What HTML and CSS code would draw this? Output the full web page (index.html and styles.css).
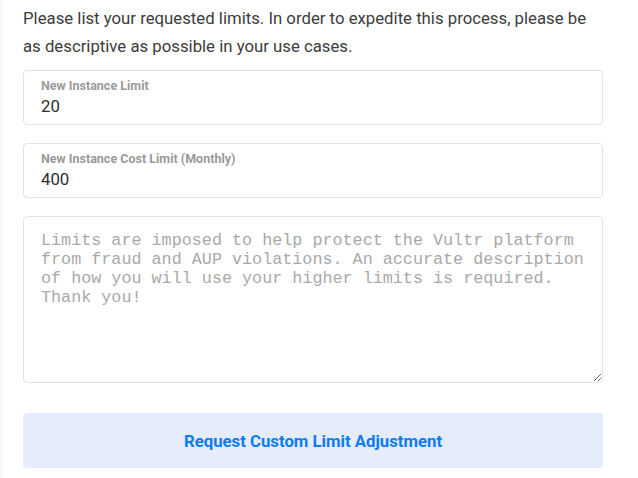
FILE: index.html
```html
<!DOCTYPE html>
<html lang="en">
<head>
  <meta charset="UTF-8">
  <title>Request Limit Increase</title>
  <link rel="stylesheet" href="styles.css">
</head>
<body class="limits-page">
  <div class="container">
    <p class="intro">Please list your requested limits. In order to expedite this process, please be as descriptive as possible in your use cases.</p>

    <label class="field">
      <span class="field-label">New Instance Limit</span>
      <input type="text" class="field-input" value="20">
    </label>

    <label class="field">
      <span class="field-label">New Instance Cost Limit (Monthly)</span>
      <input type="text" class="field-input" value="400">
    </label>

    <textarea class="use-case" placeholder="Limits are imposed to help protect the Vultr platform from fraud and AUP violations. An accurate description of how you will use your higher limits is required. Thank you!"></textarea>

    <button type="button" class="submit-btn">Request Custom Limit Adjustment</button>
  </div>
</body>
</html>
```

FILE: styles.css
```css
body.limits-page {
  margin: 0;
  min-height: 100vh;
  box-sizing: border-box;
  background: #fff;
  font-family: Roboto, "Liberation Sans", sans-serif;
  color: #3c3c3c;
  border-left: 3px solid #f7f7f7;
}

.container {
  width: 580px;
  padding: 4px 0 0 20px;
  display: flex;
  flex-direction: column;
}

.intro {
  margin: 0 0 10px;
  font-size: 16.75px;
  line-height: 28px;
}

.field {
  display: flex;
  flex-direction: column;
  height: 55px;
  box-sizing: border-box;
  padding: 7px 17px 0;
  margin-bottom: 18px;
  border: 1px solid #e3e3e3;
  border-radius: 4px;
}

.field-label {
  font-size: 12.5px;
  line-height: 16px;
  font-weight: 700;
  color: #9a9a9a;
}

.field-input {
  border: none;
  outline: none;
  padding: 0;
  margin: 0;
  font-family: Roboto, "Liberation Sans", sans-serif;
  font-size: 16.75px;
  line-height: 24px;
  height: 24px;
  color: #2e2e2e;
  background: transparent;
}

.use-case {
  height: 167px;
  box-sizing: border-box;
  padding: 14px 17px;
  border: 1px solid #e3e3e3;
  border-radius: 4px;
  font-family: "Liberation Mono", monospace;
  font-size: 16.75px;
  line-height: 19px;
  resize: vertical;
  outline: none;
}

.use-case::placeholder {
  color: #a9a9a9;
}

.submit-btn {
  margin-top: 30px;
  height: 55px;
  border: none;
  border-radius: 4px;
  background: #e5edfc;
  color: #0d7bf2;
  font-family: Roboto, "Liberation Sans", sans-serif;
  font-size: 16.75px;
  font-weight: 700;
}
```
